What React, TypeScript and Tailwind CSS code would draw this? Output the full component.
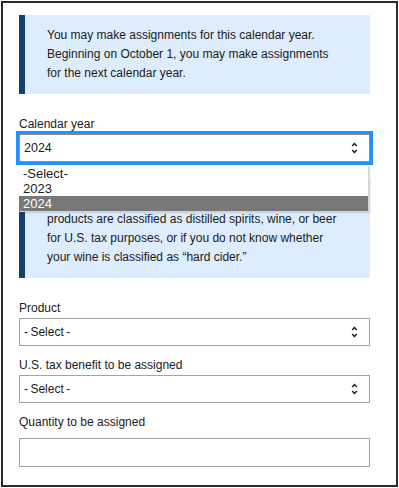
import React from "react";

const FONT = { fontFamily: "'Liberation Sans', Arial, sans-serif" };

function Chevrons() {
  return (
    <svg width="7" height="14" viewBox="0 0 7 14" className="absolute right-[11px] top-1/2 -translate-y-1/2">
      <path d="M1.2 5 L3.5 2.6 L5.8 5" fill="none" stroke="#1b1b1b" strokeWidth="1.4" />
      <path d="M1.2 9 L3.5 11.4 L5.8 9" fill="none" stroke="#1b1b1b" strokeWidth="1.4" />
    </svg>
  );
}

function InfoBox({ lines, className = "" }: { lines: string[]; className?: string }) {
  return (
    <div className={`border-l-[6px] border-[#163f6f] bg-[#deedfd] py-[11px] pl-[22px] text-[12px] leading-[19px] ${className}`}>
      {lines.map((l, i) => (
        <div key={i} className="whitespace-nowrap">
          {l}
        </div>
      ))}
    </div>
  );
}

function Label({ children, className = "" }: { children: React.ReactNode; className?: string }) {
  return <div className={`block text-[12px] leading-[19px] ${className}`}>{children}</div>;
}

function SelectBox({ value }: { value: string }) {
  return (
    <div className="relative flex h-[28px] items-center border border-[#a3a3a3] bg-white pl-[4px] text-[12px]">
      <span>{value}</span>
      <Chevrons />
    </div>
  );
}

export default function App() {
  return (
    <div className="min-h-[488px] bg-white pl-px pt-px" style={FONT}>
      <div className="h-[486px] w-[397px] border-2 border-[#2b2b2b] pl-4 pr-[26px] pt-3 text-[#1b1b1b]">
        <InfoBox
          lines={[
            "You may make assignments for this calendar year.",
            "Beginning on October 1, you may make assignments",
            "for the next calendar year.",
          ]}
        />

        <Label className="mt-[21px]">Calendar year</Label>
        <div className="relative">
          <div className="relative flex h-[28px] items-center border border-[#8a8a8a] bg-white pl-[4px] text-[12.5px] shadow-[0_0_0_3px_#2491ff]">
            <span>2024</span>
            <Chevrons />
          </div>
          <div className="absolute left-0 right-px top-[32px] z-10 border-r border-b border-[#d4d4d4] bg-white text-[13px] shadow-[1px_1px_2px_rgba(0,0,0,0.15)]">
            <div className="h-[15px] pl-[4px] leading-[15px]">-Select-</div>
            <div className="h-[15px] pl-[4px] leading-[15px]">2023</div>
            <div className="h-[15px] bg-[#787878] pl-[4px] leading-[15px] text-white">2024</div>
          </div>
        </div>

        <InfoBox
          className="mt-[18px]"
          lines={[
            "Contact us if you are not sure whether your alcohol",
            "products are classified as distilled spirits, wine, or beer",
            "for U.S. tax purposes, or if you do not know whether",
            "your wine is classified as \u201chard cider.\u201d",
          ]}
        />

        <Label className="mt-[21px]">Product</Label>
        <SelectBox value={"-\u2009Select\u2009-"} />

        <Label className="mt-[10px]">U.S. tax benefit to be assigned</Label>
        <SelectBox value={"-\u2009Select\u2009-"} />

        <Label className="mt-[10px]">Quantity to be assigned</Label>
        <input
          type="text"
          aria-label="Quantity to be assigned"
          className="mt-[5.5px] block h-[29px] w-full border border-[#a3a3a3] bg-white px-[4px] text-[12px] outline-none"
        />
      </div>
    </div>
  );
}
